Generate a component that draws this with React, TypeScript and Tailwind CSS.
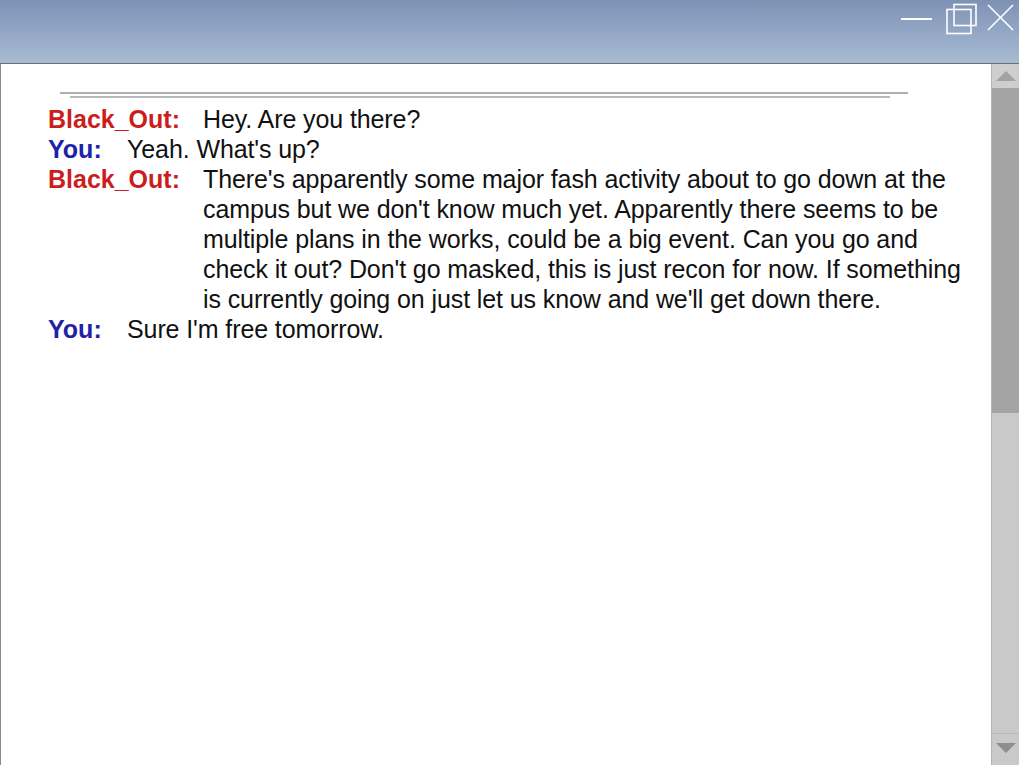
import React from 'react';

type Line = { who: 'Black_Out' | 'You'; text: string };

const chat: Line[] = [
  { who: 'Black_Out', text: 'Hey. Are you there?' },
  { who: 'You', text: "Yeah. What's up?" },
  {
    who: 'Black_Out',
    text: "There's apparently some major fash activity about to go down at the campus but we don't know much yet. Apparently there seems to be multiple plans in the works, could be a big event. Can you go and check it out? Don't go masked, this is just recon for now. If something is currently going on just let us know and we'll get down there.",
  },
  { who: 'You', text: "Sure I'm free tomorrow." },
];

function TitleBar() {
  return (
    <div className="h-[64px] flex justify-end items-start bg-gradient-to-b from-[#7e92b5] to-[#a8bbd4] border-b border-[#707070]">
      <svg width="120" height="40" viewBox="0 0 120 40" fill="none" stroke="#ffffff" strokeWidth="1.6">
        {/* minimize */}
        <line x1="2" y1="19" x2="33" y2="19" strokeWidth="2" />
        {/* restore */}
        <rect x="55" y="4.5" width="22" height="21" />
        <rect x="48" y="9.5" width="24" height="24" />
        {/* close */}
        <line x1="89" y1="5" x2="114" y2="30" />
        <line x1="114" y1="5" x2="89" y2="30" />
      </svg>
    </div>
  );
}

function ScrollBar() {
  return (
    <div className="w-[28px] flex flex-col bg-[#c9c9c9] border-l border-[#b4b4b4]">
      <div className="h-[24px] flex items-center justify-center bg-[#cecece]">
        <svg width="22" height="12" viewBox="0 0 22 12">
          <polygon points="11,1 21,11 1,11" fill="#a2a2a2" />
        </svg>
      </div>
      <div className="h-[325px] bg-[#a4a4a4]" />
      <div className="flex-1" />
      <div className="h-[32px] flex items-start justify-center pt-[8px] border-t border-[#b8b8b8]">
        <svg width="22" height="12" viewBox="0 0 22 12">
          <polygon points="1,1 21,1 11,11" fill="#8e8e8e" />
        </svg>
      </div>
    </div>
  );
}

export default function App() {
  return (
    <div className="w-[1019px] h-[765px] flex flex-col bg-white overflow-hidden font-['Liberation_Sans',Arial,sans-serif]">
      <TitleBar />
      <div className="flex-1 flex">
        <div className="flex-1 border-l border-[#8a8a8a]">
          <div className="relative h-[40px]">
            <div className="absolute left-[59px] top-[28px] w-[848px] h-[2px] bg-[#b0b0b0]" />
            <div className="absolute left-[69px] top-[32px] w-[820px] h-[2px] bg-[#b8b8b8]" />
          </div>
          <div className="pl-[47px] text-[25px] leading-[30px] text-[#111111]">
            {chat.map((l, i) => (
              <div key={i} className="flex">
                <span
                  className={
                    l.who === 'You'
                      ? 'font-bold text-[#1e22a8] shrink-0 w-[79px]'
                      : 'font-bold text-[#cc1d1d] shrink-0 w-[155px]'
                  }
                >
                  {l.who}:
                </span>
                <span className="w-[768px] tracking-[-0.1px]">{l.text}</span>
              </div>
            ))}
          </div>
        </div>
        <ScrollBar />
      </div>
    </div>
  );
}
